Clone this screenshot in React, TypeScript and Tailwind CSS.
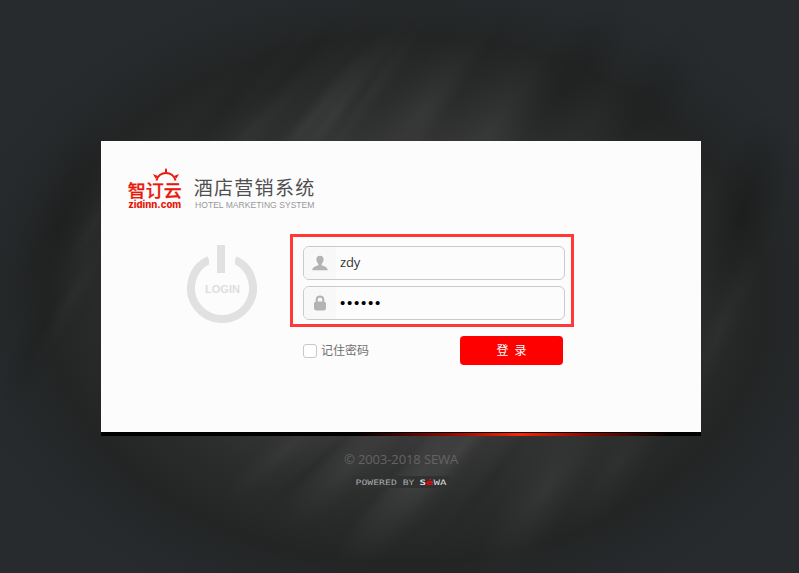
import React from 'react';

const cjk = "font-['Open_Sans','Noto_Sans_CJK_SC',sans-serif]";

type Streak = [number, number, number, number, number, number];

// Each streak: centre x, centre y, length radius, thickness radius, angle, opacity.
const lightStreaks: Streak[] = [
  [335, 115, 120, 28, -50, 0.24],
  [310, 120, 90, 11, -50, 0.14],
  [375, 85, 90, 10, -54, 0.1],
  [425, 110, 100, 34, -54, 0.16],
  [490, 130, 100, 34, -58, 0.14],
  [250, 130, 90, 18, -48, 0.14],
  [420, 475, 120, 34, -50, 0.34],
  [460, 450, 90, 12, -48, 0.2],
  [350, 465, 90, 24, -44, 0.2],
  [285, 450, 80, 16, -40, 0.14],
  [545, 490, 110, 34, -55, 0.2],
  [620, 460, 90, 26, -55, 0.12],
  [70, 300, 85, 14, -62, 0.12],
  [90, 230, 80, 14, -60, 0.08],
  [720, 330, 90, 16, -66, 0.1],
];

const darkStreaks: Streak[] = [
  [365, 90, 100, 12, -53, 0.22],
  [280, 85, 110, 16, -48, 0.22],
  [225, 110, 110, 20, -48, 0.2],
  [465, 85, 100, 14, -57, 0.14],
  [565, 90, 110, 36, -58, 0.26],
  [640, 120, 110, 40, -60, 0.22],
  [60, 220, 120, 34, -66, 0.28],
  [45, 325, 100, 24, -66, 0.22],
  [742, 215, 110, 36, -72, 0.4],
  [388, 480, 90, 9, -50, 0.16],
  [315, 465, 80, 9, -42, 0.16],
  [495, 475, 100, 12, -52, 0.16],
];

function Streaks({ items, fill }: { items: Streak[]; fill: string }) {
  return (
    <>
      {items.map(([x, y, rx, ry, angle, opacity], i) => (
        <ellipse key={i} rx={rx} ry={ry} opacity={opacity} fill={fill} transform={`translate(${x} ${y}) rotate(${angle})`} />
      ))}
    </>
  );
}

// Dark backdrop: radial glow with brushed diagonal streaks.
function Backdrop() {
  return (
    <svg className="absolute inset-0" width="799" height="573" viewBox="0 0 799 573" aria-hidden="true">
      <defs>
        <radialGradient id="base" gradientUnits="userSpaceOnUse" cx="0" cy="0" r="1" gradientTransform="translate(405 300) scale(450 330)">
          <stop offset="0" stopColor="#484848" />
          <stop offset="0.4" stopColor="#393939" />
          <stop offset="0.6" stopColor="#2c2d2d" />
          <stop offset="0.8" stopColor="#232525" />
          <stop offset="1" stopColor="#272b2e" />
        </radialGradient>
        <radialGradient id="light">
          <stop offset="0" stopColor="#606260" />
          <stop offset="0.5" stopColor="#565856" stopOpacity=".5" />
          <stop offset="1" stopColor="#505250" stopOpacity="0" />
        </radialGradient>
        <radialGradient id="dark">
          <stop offset="0" stopColor="#121312" />
          <stop offset="0.5" stopColor="#141514" stopOpacity=".5" />
          <stop offset="1" stopColor="#161716" stopOpacity="0" />
        </radialGradient>
      </defs>
      <rect width="799" height="573" fill="url(#base)" />
      <Streaks items={lightStreaks} fill="url(#light)" />
      <Streaks items={darkStreaks} fill="url(#dark)" />
    </svg>
  );
}

function BrandMark() {
  return (
    <svg className="overflow-visible" width="56" height="44" viewBox="0 0 56 44" fill="#e8190b">
      <path d="M29.5 12.5C32 2.5 46 2.5 48.5 12.5" fill="none" stroke="#e8190b" strokeWidth="2" />
      <path d="M38 4V1.5L39 0L40 1.5V4ZM26 6L31 8L28.5 10.5ZM52 6L47 8L49.5 10.5Z" />
      <text x="0.8" y="29.3" fontSize="17" fontWeight="500" textLength="54" lengthAdjust="spacingAndGlyphs" fontFamily="Noto Sans CJK SC, sans-serif" stroke="#e8190b" strokeWidth=".25">智订云</text>
      <text x="1.2" y="40" fontSize="9.5" fontWeight="800" textLength="53" lengthAdjust="spacingAndGlyphs" fontFamily="Inter, sans-serif">zidinn.com</text>
    </svg>
  );
}

function ProductName() {
  return (
    <svg className="overflow-visible" width="124" height="36" viewBox="0 0 124 36">
      <text x="0.7" y="17.5" fontSize="19" textLength="120.5" fill="#4f4f4f" fontFamily="Noto Sans CJK SC, sans-serif">酒店营销系统</text>
      <text x="2" y="31" fontSize="9" textLength="119.5" lengthAdjust="spacingAndGlyphs" fill="#999" fontFamily="Liberation Sans, sans-serif">HOTEL MARKETING SYSTEM</text>
    </svg>
  );
}

function PowerEmblem() {
  return (
    <svg width="70" height="78" viewBox="0 0 70 78">
      <path d="M22 14.9A31 31 0 1 0 48 14.9" fill="none" stroke="#e1e1e1" strokeWidth="8" />
      <path d="M22 0V22H48V0Z" fill="#fcfcfc" />
      <path d="M30 0H38V28H30Z" fill="#e1e1e1" />
      <text x="18" y="48" fontSize="11" fontWeight="700" textLength="35" fill="#dedede" fontFamily="Liberation Sans, sans-serif">LOGIN</text>
    </svg>
  );
}

function Field({ icon, children }: { icon: React.ReactNode; children: React.ReactNode }) {
  return (
    <label className="flex h-[34px] w-[262px] overflow-hidden rounded-md border border-[#cacaca] bg-[#fcfcfc]">
      <span className="flex w-8 shrink-0 items-center justify-center bg-[#f8f8f8]">{icon}</span>
      {children}
    </label>
  );
}

export default function App() {
  return (
    <main className={`relative h-[573px] w-[799px] overflow-hidden bg-[#272b2e] ${cjk}`}>
      <Backdrop />
      <div className="relative ml-[101px] flex w-[600px] flex-col pt-[141px]">
        <section className="h-[291px] bg-[#fcfcfc]">
          <header className="flex h-[93px] pl-[26px] pt-[27px]">
            <BrandMark />
            <div className="pl-[10px] pt-[9px]"><ProductName /></div>
          </header>
          <div className="flex">
            <div className="w-[189px] pl-[86px] pt-[11px]"><PowerEmblem /></div>
            <form>
              <div className="flex h-[93px] w-[284px] flex-col gap-1.5 border-3 border-[#ff3838] pl-[10px] pt-[9px]">
                <Field icon={
                  <svg width="16" height="16" viewBox="0 0 16 16" fill="#b3b3b3">
                    <path d="M8 0.8C10.5.8 11.7 2.3 11.6 4.6C11.5 6.7 10.6 8 9.7 8.9V10.3C11 11.1 15.7 11.7 15.7 15.2H.3C.3 11.7 5 11.1 6.3 10.3V8.9C5.4 8 4.5 6.7 4.4 4.6C4.3 2.3 5.5.8 8 .8Z" />
                  </svg>
                }>
                  <input className="min-w-0 flex-1 bg-transparent pl-1 text-[13px] tracking-[-0.2px] text-[#333] outline-none" defaultValue="zdy" />
                </Field>
                <Field icon={
                  <svg width="14" height="16" viewBox="0 0 14 16" fill="#b3b3b3">
                    <path d="M3.7 8V5C3.7 0.4 10.3.4 10.3 5V8" fill="none" stroke="#b3b3b3" strokeWidth="2" />
                    <rect x="1" y="6.5" width="12" height="9" rx="2.5" />
                  </svg>
                }>
                  <input type="password" className="min-w-0 flex-1 bg-transparent pl-1 font-['Liberation_Sans',sans-serif] text-[15px] tracking-[1.75px] text-black outline-none" defaultValue="123456" />
                </Field>
              </div>
              <div className="flex h-[38px] items-end justify-between pl-[13px] pr-[11px]">
                <label className="flex h-[29px] items-center gap-1 text-xs text-[#707070]">
                  <span className="size-[14px] rounded-[3px] border border-[#c8c8c8] bg-white" />
                  <span>记住密码</span>
                </label>
                <button type="button" className="h-[29px] w-[103px] rounded bg-[#ff0000] text-xs text-white"><span className="whitespace-pre">登  录</span></button>
              </div>
            </form>
          </div>
        </section>
        <div className="h-1 bg-black pt-px">
          <div className="ml-[255px] h-[3px] w-[315px] bg-[linear-gradient(90deg,#000_0%,#910a00_30%,#ff2200_52%,#910a00_72%,#000_100%)]" />
        </div>
        <footer className="flex flex-col items-center">
          <p className="mt-[13px] h-5 text-[13px] leading-5 tracking-[-0.1px] text-[#636465]">© 2003-2018 SEWA</p>
          <svg className="mt-[7px]" width="98" height="12" viewBox="0 0 98 12" fontFamily="DejaVu Sans Mono, monospace" fontSize="7.5">
            <rect width="98" height="12" fill="#303131" />
            <text x="3.5" y="9" textLength="59" lengthAdjust="spacingAndGlyphs" fill="#aaa">POWERED BY</text>
            <text x="67.5" y="9" fill="#ddd" textLength="6.5" lengthAdjust="spacingAndGlyphs" fontWeight="700">S</text>
            <text x="73.5" y="9" fill="#f00" textLength="7.5" lengthAdjust="spacingAndGlyphs" fontWeight="700">ė</text>
            <text x="81.5" y="9" fill="#ddd" textLength="13" lengthAdjust="spacingAndGlyphs">WA</text>
          </svg>
        </footer>
      </div>
    </main>
  );
}
